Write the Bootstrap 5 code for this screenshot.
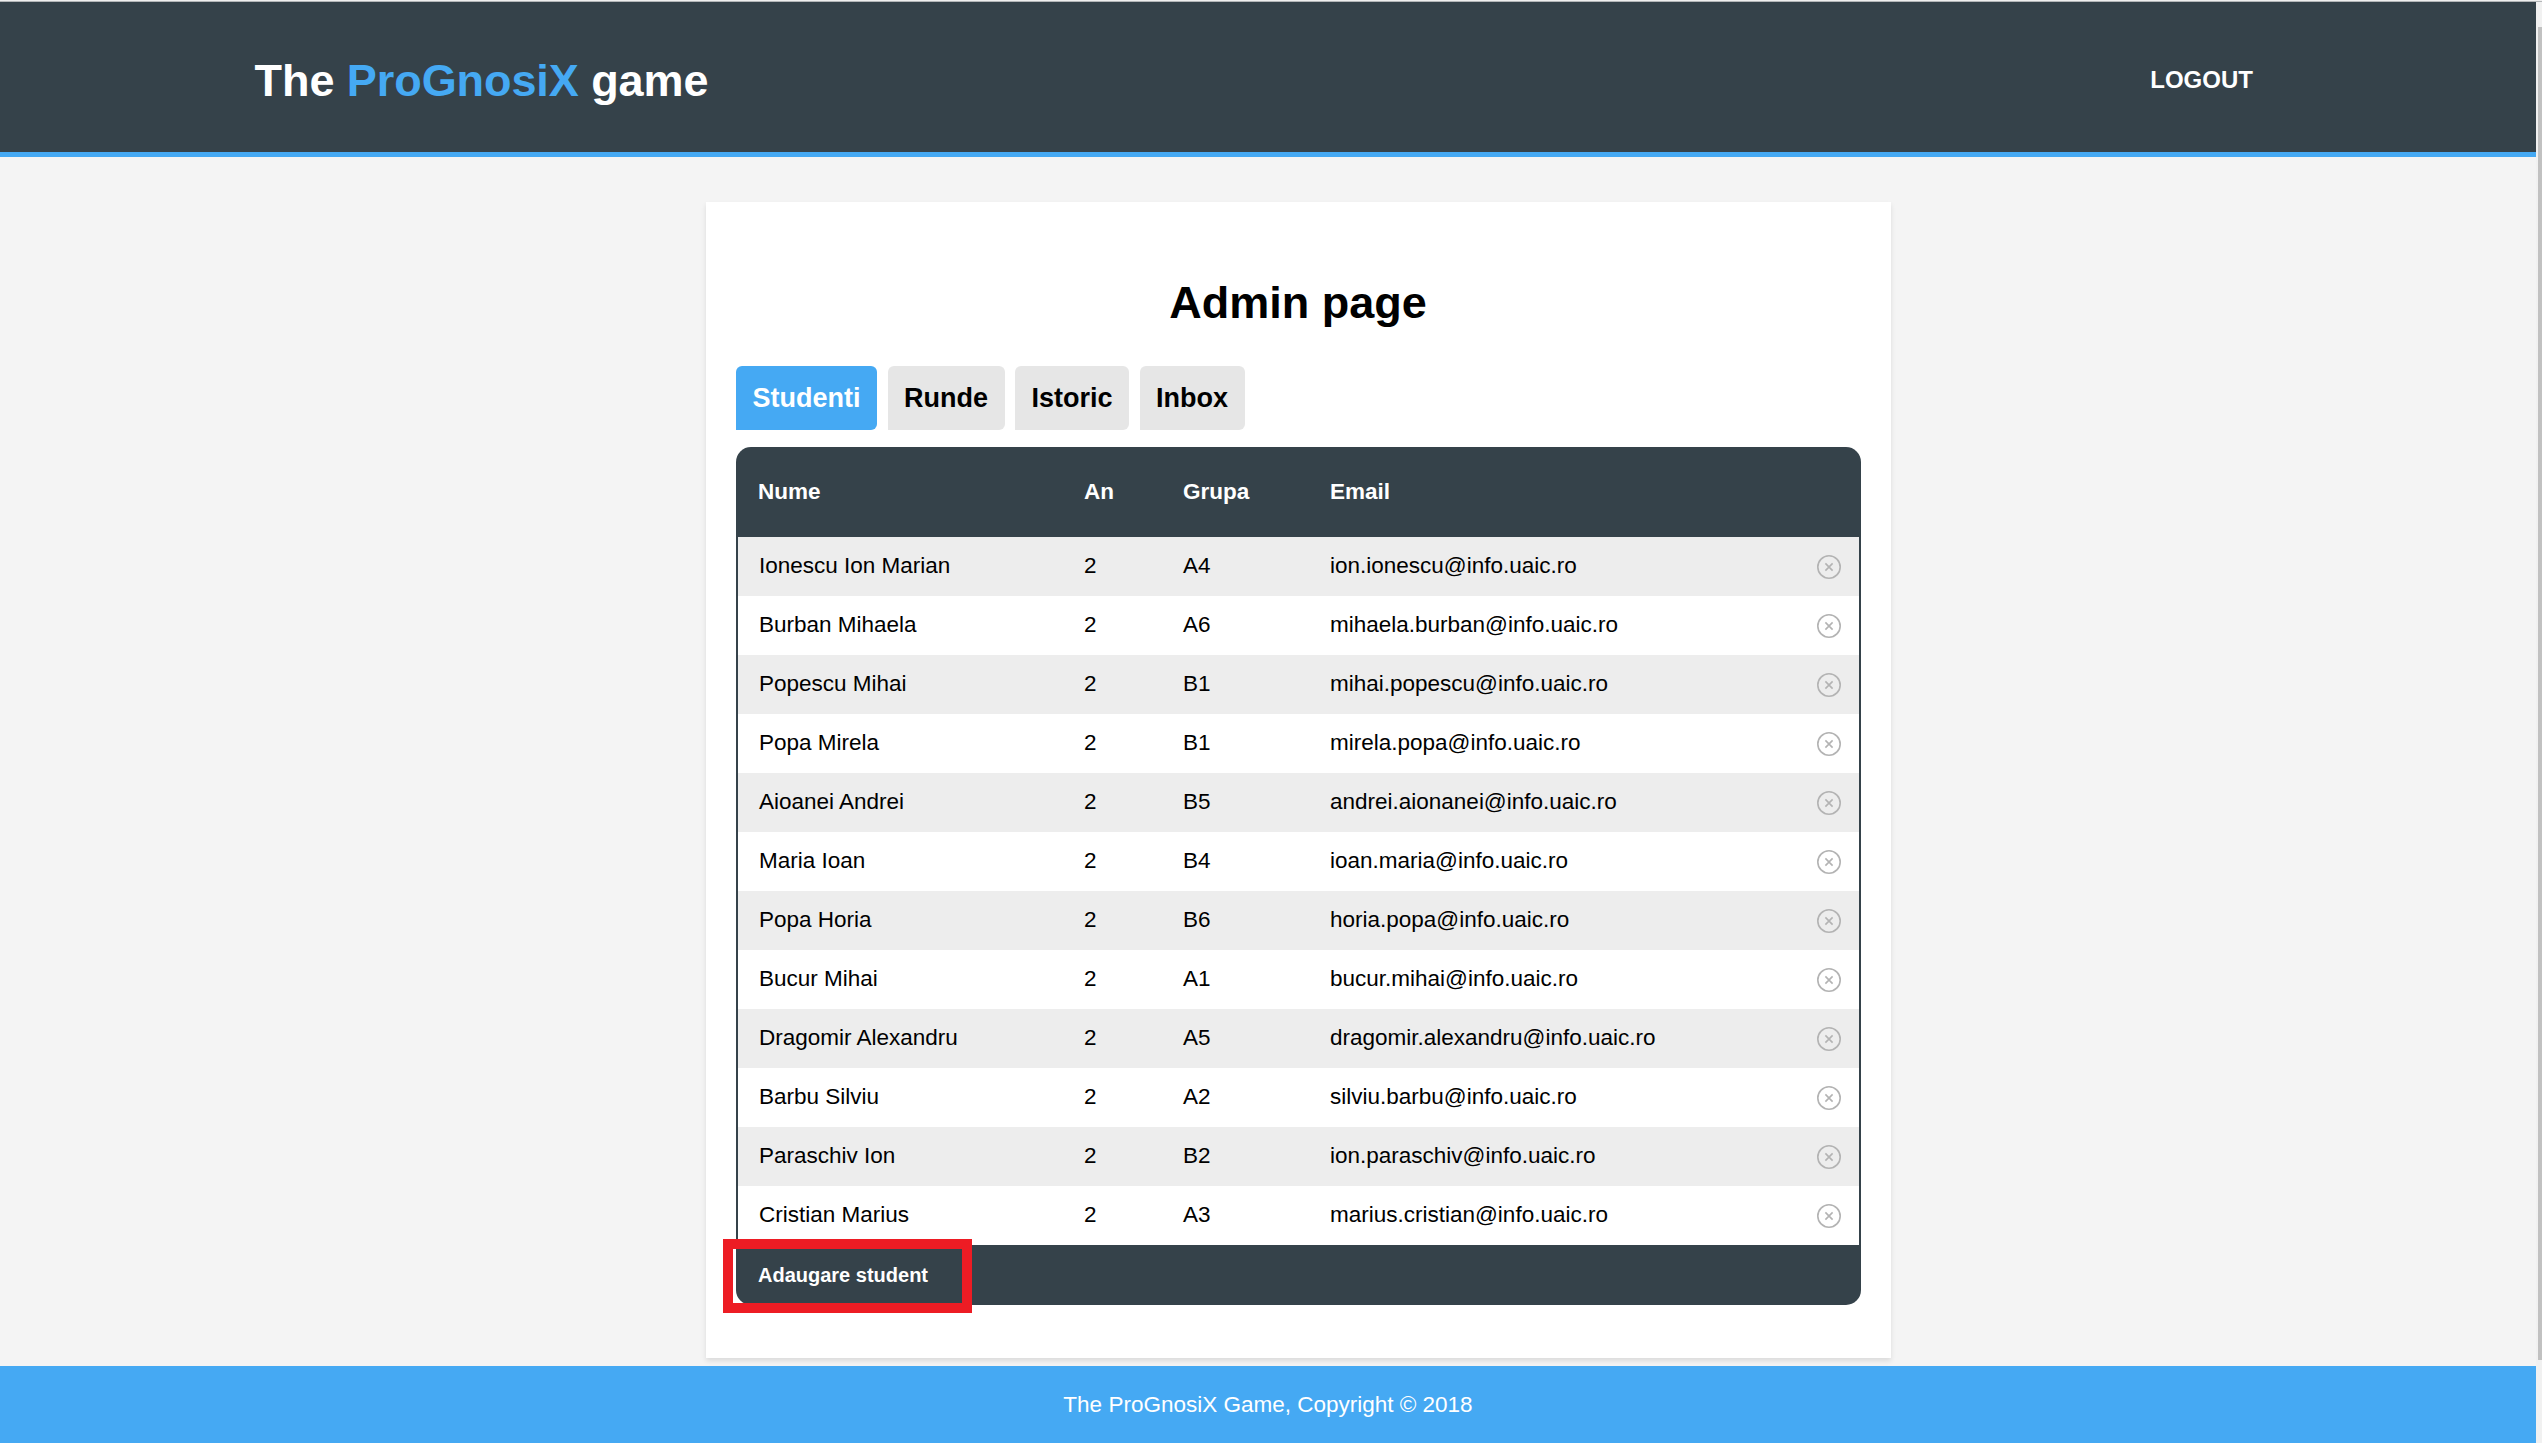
<!DOCTYPE html>
<html lang="ro">
<head>
<meta charset="utf-8">
<meta name="viewport" content="width=device-width, initial-scale=1">
<title>The ProGnosiX game</title>
<link href="https://cdn.jsdelivr.net/npm/bootstrap@5.3.0/dist/css/bootstrap.min.css" rel="stylesheet">
<style>
:root{--ink:#35424a;--sky:#45a9f3;--ground:#f4f4f4}
html,body{height:100%;overflow:hidden}
body{font-family:"Liberation Sans",Arial,sans-serif;font-size:22.5px;line-height:1.5;color:#000;background:var(--ground)}
.window-edge{height:2px;background:#efefef;border-bottom:1px solid #b3b6b8}
.site-head{height:155px;background:var(--ink);border-bottom:5px solid var(--sky)}
.site-head .inner{width:80%;padding-right:29.5px}
.brand{font-size:45px;font-weight:700;line-height:1;padding:7px 0 0 1px;letter-spacing:-.07px}
.brand span{color:var(--sky)}
.logout{font-size:24px;line-height:1;padding-top:6px}
.panel{width:1185px;height:1156px;margin:45px 0 0 706px;padding:74px 30px 0;box-shadow:0 3px 5px rgba(0,0,0,.1)}
.panel h1{font-size:45px;font-weight:700;line-height:54px;margin-bottom:36px;padding-right:1px}
.tabs{gap:10.5px;margin-bottom:17px}
.tabs .nav-link{height:64px;padding:0 16.5px;font-size:27px;line-height:64px;font-weight:700;color:#000;background:#e6e6e6;border-radius:6px 6px 6px 0}
.tabs .nav-link.active{color:#fff;background:var(--sky)}
.roster{border-radius:15px;background:var(--ink)}
.roster table{table-layout:fixed;--bs-table-color:#000;--bs-table-bg:transparent}
.roster th,.roster td{padding:0;border:0;vertical-align:middle}
.roster thead th{height:90px;padding-bottom:1px;color:#fff}
.roster thead th:first-child{padding-left:21px}
.roster tbody td{height:59px;padding-bottom:2px;line-height:1.5;background:#fff}
.roster tbody tr:nth-child(odd) td{background:#ededed}
.roster tbody td:first-child{border-left:2px solid var(--ink);padding-left:21px}
.roster tbody td:last-child{border-right:2px solid var(--ink);padding-right:18px;text-align:right}
.c-name{width:347px}.c-year{width:99px}.c-group{width:147px}
.roster svg{display:block;margin:2px 0 0 auto}
.add-row{height:60px;padding-left:22px;font-size:20px;line-height:61px}
.highlight{left:-13px;top:-6px;width:249px;height:74px;border:10px solid #ed1c24}
.site-foot{height:77px;margin-top:8px;line-height:77px;background:var(--sky)}
.scroll-rail{width:6px;background:#f1f1f1;padding:25px 0 83px 2px}
.scroll-rail div{height:100%;background:#c1c1c1}
</style>
<script src="https://cdn.jsdelivr.net/npm/bootstrap@5.3.0/dist/js/bootstrap.bundle.min.js"></script>
</head>
<body class="d-flex flex-column">
<div class="window-edge flex-shrink-0"></div>
<div class="d-flex flex-grow-1">
  <div class="flex-grow-1">
    <header class="site-head d-flex justify-content-center">
      <div class="inner d-flex justify-content-between align-items-center">
        <div class="brand text-white">The <span>ProGnosiX</span> game</div>
        <a href="#" class="logout text-white fw-bold text-decoration-none text-uppercase">Logout</a>
      </div>
    </header>
    <main class="d-flex">
      <section class="panel bg-white">
        <h1 class="text-center">Admin page</h1>
        <nav class="nav tabs">
          <a class="nav-link active" href="#">Studenti</a>
          <a class="nav-link" href="#">Runde</a>
          <a class="nav-link" href="#">Istoric</a>
          <a class="nav-link" href="#">Inbox</a>
        </nav>
        <div class="roster">
          <table class="table mb-0">
            <colgroup><col class="c-name"><col class="c-year"><col class="c-group"><col><col style="width:80px"></colgroup>
            <thead><tr><th>Nume</th><th>An</th><th>Grupa</th><th>Email</th><th></th></tr></thead>
            <tbody id="students"></tbody>
          </table>
          <div class="add-row position-relative text-white fw-bold">Adaugare student<div class="highlight position-absolute"></div></div>
        </div>
      </section>
    </main>
    <footer class="site-foot text-white text-center">The ProGnosiX Game, Copyright © 2018</footer>
  </div>
  <div class="scroll-rail flex-shrink-0"><div></div></div>
</div>
<script>
const students=[
["Ionescu Ion Marian","A4","ion.ionescu"],
["Burban Mihaela","A6","mihaela.burban"],
["Popescu Mihai","B1","mihai.popescu"],
["Popa Mirela","B1","mirela.popa"],
["Aioanei Andrei","B5","andrei.aionanei"],
["Maria Ioan","B4","ioan.maria"],
["Popa Horia","B6","horia.popa"],
["Bucur Mihai","A1","bucur.mihai"],
["Dragomir Alexandru","A5","dragomir.alexandru"],
["Barbu Silviu","A2","silviu.barbu"],
["Paraschiv Ion","B2","ion.paraschiv"],
["Cristian Marius","A3","marius.cristian"]];
const remove='<svg width="24" height="24" viewBox="0 0 24 24" fill="none" stroke="#b3b3b3" stroke-width="1.6"><circle cx="12" cy="12" r="11.2"/><path d="M8.4 8.4l7.2 7.2M15.6 8.4l-7.2 7.2"/></svg>';
document.getElementById("students").innerHTML=students.map(([n,g,m])=>`<tr><td>${n}</td><td>2</td><td>${g}</td><td>${m}@info.uaic.ro</td><td>${remove}</td></tr>`).join("");
</script>
</body>
</html>
